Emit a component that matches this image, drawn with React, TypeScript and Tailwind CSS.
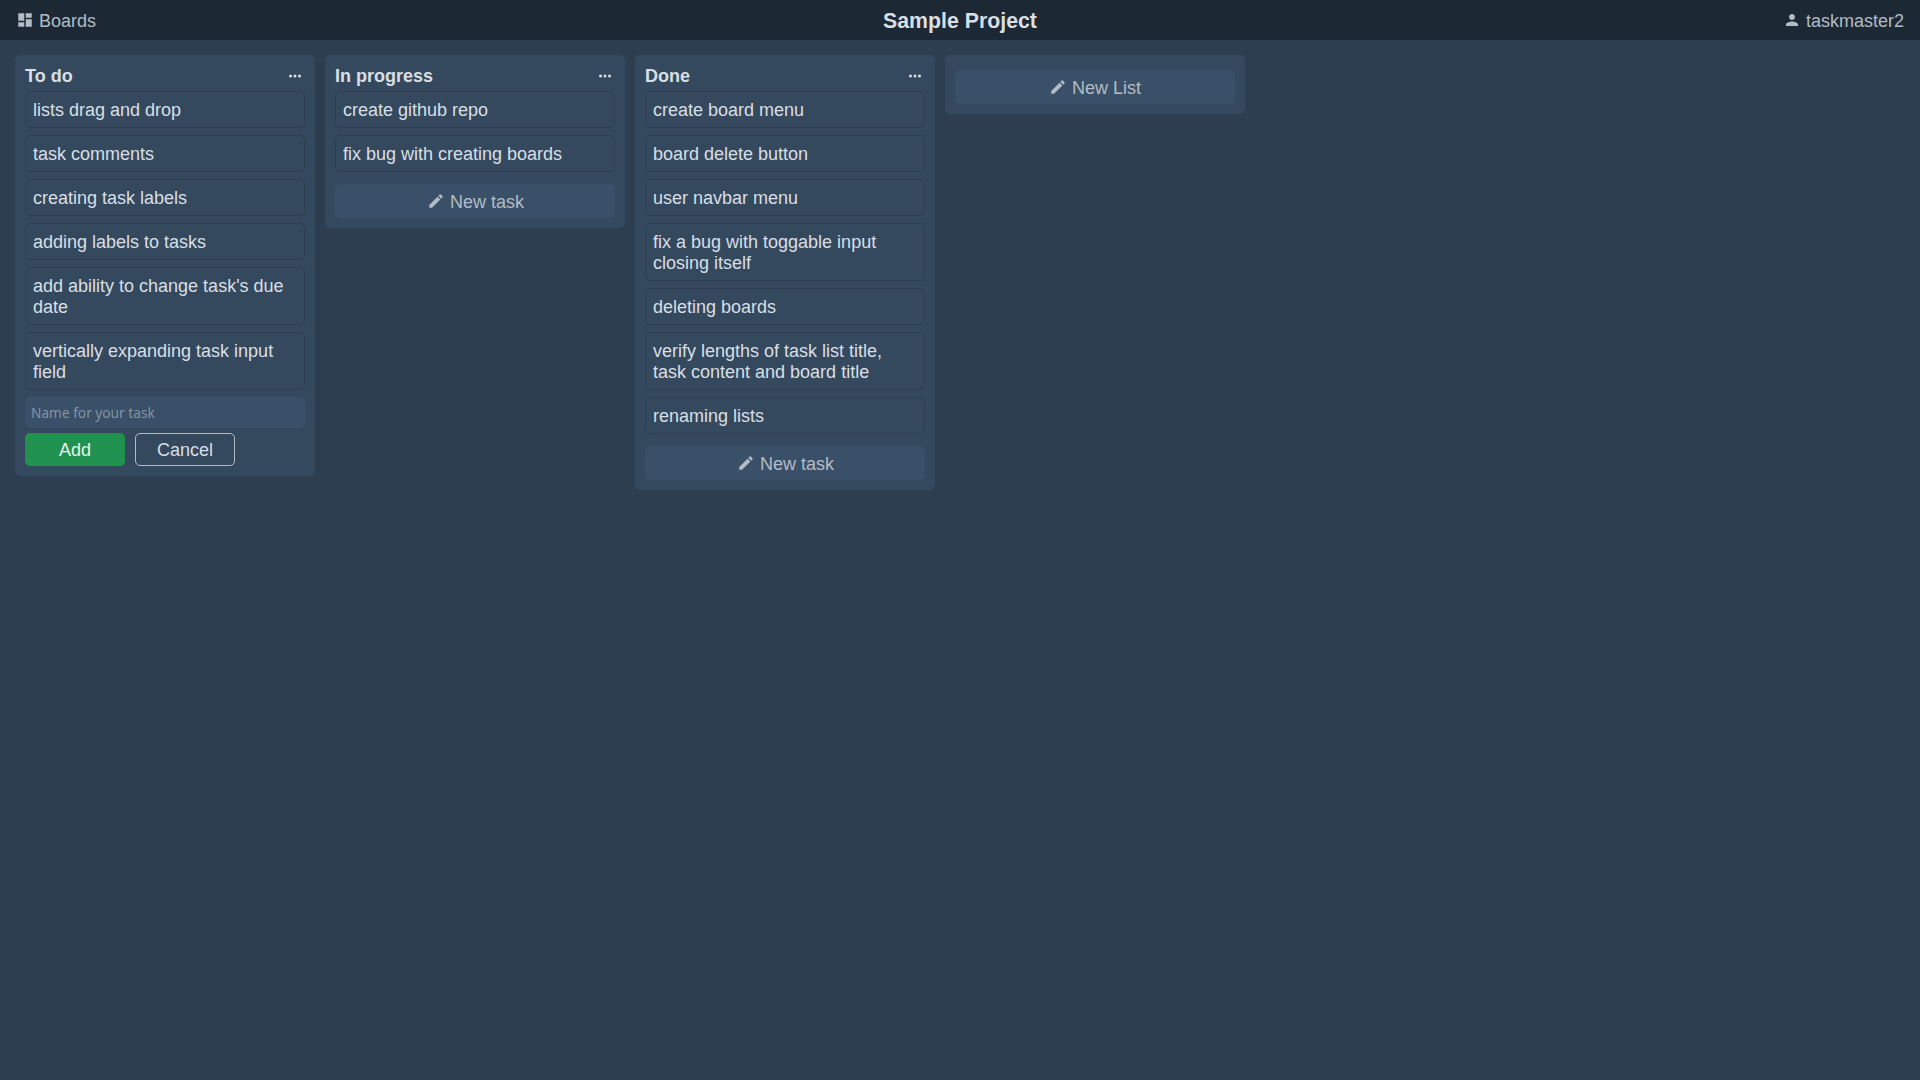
import React from "react";

const Edit = () => (
  <svg width="18" height="18" viewBox="0 0 24 24" fill="currentColor" className="shrink-0">
    <path d="M3 17.25V21h3.75L17.81 9.94l-3.75-3.75L3 17.25zM20.71 7.04c.39-.39.39-1.02 0-1.41l-2.34-2.34c-.39-.39-1.02-.39-1.41 0l-1.83 1.83 3.75 3.75 1.83-1.83z" />
  </svg>
);

const Dots = () => (
  <svg width="18" height="18" viewBox="0 0 24 24" fill="currentColor">
    <circle cx="6" cy="12" r="2" />
    <circle cx="12" cy="12" r="2" />
    <circle cx="18" cy="12" r="2" />
  </svg>
);

const Task = ({ text }: { text: string }) => (
  <div className="mb-[7px] rounded-[5px] border border-[#2c3e50] px-[7px] pt-[8px] pb-[6px] text-[18px] leading-[21px] text-[#d9dfe4]">
    {text}
  </div>
);

const NewTaskButton = () => (
  <button className="flex h-[34px] w-full items-center justify-center gap-[5px] rounded-[5px] bg-[#3a5068] pl-[1px] text-[18px] text-[#b3bcc6]">
    <Edit />
    <span className="pt-[2px]">New task</span>
  </button>
);

const NewListButton = () => (
  <button className="flex h-[34px] w-full items-center justify-center gap-[5px] rounded-[5px] bg-[#3a5068] text-[18px] text-[#b3bcc6]">
    <Edit />
    <span className="pt-[2px]">New List</span>
  </button>
);

const Column = ({ title, children }: { title: string; children: React.ReactNode }) => (
  <section className="w-[300px] shrink-0 rounded-[5px] bg-[#34495e] p-[10px]">
    <header className="flex h-[26px] items-center justify-between pb-[4px]">
      <h2 className="text-[18px] font-bold text-[#d9dfe4]">{title}</h2>
      <span className="mr-[1px] text-[#d9dfe4]">
        <Dots />
      </span>
    </header>
    {children}
  </section>
);

export default function App() {
  return (
    <div className="min-h-[1080px] bg-[#2c3e50] font-['Liberation_Sans',Arial,sans-serif]">
      <nav className="relative flex h-[40px] items-center justify-between bg-[#1c2833] pl-[16px] pr-[16px] text-[18px] text-[#b3bcc6]">
        <div className="flex items-center gap-[5px]">
          <svg width="18" height="18" viewBox="0 0 24 24" fill="currentColor">
            <path d="M3 13h8V3H3v10zm0 8h8v-6H3v6zm10 0h8V11h-8v10zm0-18v6h8V3h-8z" />
          </svg>
          <span className="pt-[2px]">Boards</span>
        </div>
        <h1 className="absolute left-0 right-0 pt-[4px] text-center text-[21.3px] font-bold text-[#d9dfe4]">Sample Project</h1>
        <div className="flex items-center gap-[5px]">
          <svg width="18" height="18" viewBox="0 0 24 24" fill="currentColor">
            <path d="M12 12c2.21 0 4-1.79 4-4s-1.79-4-4-4-4 1.79-4 4 1.79 4 4 4zm0 2c-2.67 0-8 1.34-8 4v2h16v-2c0-2.66-5.33-4-8-4z" />
          </svg>
          <span className="pt-[2px]">taskmaster2</span>
        </div>
      </nav>
      <main className="flex items-start gap-[10px] px-[15px] pt-[15px]">
        <Column title="To do">
          <Task text="lists drag and drop" />
          <Task text="task comments" />
          <Task text="creating task labels" />
          <Task text="adding labels to tasks" />
          <Task text="add ability to change task's due date" />
          <Task text="vertically expanding task input field" />
          <input
            placeholder="Name for your task"
            className="block h-[31px] w-full rounded-[5px] bg-[#3a5068] px-[6px] font-['Noto_Sans',sans-serif] text-[13.7px] text-[#dfe4e8] outline-none placeholder:text-[#8494a3]"
          />
          <div className="mt-[5px] flex gap-[10px]">
            <button className="h-[33px] w-[100px] rounded-[5px] bg-[#219150] pt-[2px] text-[18px] text-[#e6f3eb]">Add</button>
            <button className="h-[33px] w-[100px] rounded-[5px] border border-[#b3bcc6] pt-[2px] text-[18px] text-[#d9dfe4]">Cancel</button>
          </div>
        </Column>
        <Column title="In progress">
          <Task text="create github repo" />
          <Task text="fix bug with creating boards" />
          <div className="mt-[12px]">
            <NewTaskButton />
          </div>
        </Column>
        <Column title="Done">
          <Task text="create board menu" />
          <Task text="board delete button" />
          <Task text="user navbar menu" />
          <Task text="fix a bug with toggable input closing itself" />
          <Task text="deleting boards" />
          <Task text="verify lengths of task list title, task content and board title" />
          <Task text="renaming lists" />
          <div className="mt-[12px]">
            <NewTaskButton />
          </div>
        </Column>
        <section className="w-[300px] shrink-0 rounded-[5px] bg-[#34495e] px-[10px] pt-[15px] pb-[10px]">
          <NewListButton />
        </section>
      </main>
    </div>
  );
}
